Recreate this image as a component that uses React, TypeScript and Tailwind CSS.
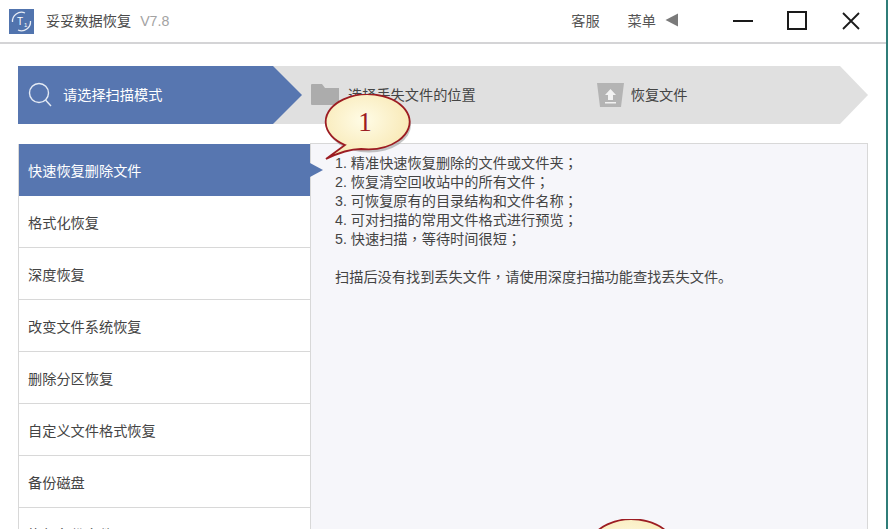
const font = "font-['Liberation_Sans','Noto_Sans_CJK_SC',sans-serif]";

const modes = ['快速恢复删除文件', '格式化恢复', '深度恢复', '改变文件系统恢复', '删除分区恢复', '自定义文件格式恢复', '备份磁盘', '恢复备份文件'];

const features = ['1. 精准快速恢复删除的文件或文件夹；', '2. 恢复清空回收站中的所有文件；', '3. 可恢复原有的目录结构和文件名称；', '4. 可对扫描的常用文件格式进行预览；', '5. 快速扫描，等待时间很短；'];

// the picture centres its full-width punctuation, which the TC cut of the font does
function Line({ text }: { text: string }) {
    return (
        <p className="h-[19px]">
            {text.split(/([；，])/).map((part, i) =>
                part === '；' || part === '，' ? (
                    <span key={i} className="font-['Noto_Sans_CJK_TC',sans-serif]">{part}</span>
                ) : (
                    part
                ),
            )}
        </p>
    );
}

function Logo() {
    return (
        <svg width="25" height="25" viewBox="0 0 25 25" className="shrink-0">
            <rect width="25" height="25" fill="#5174ae" />
            <path d="M3.5 13 A9 9 0 0 1 16 4" fill="none" stroke="#e8edf5" strokeWidth="1.3" />
            <path d="M21.5 12 A9 9 0 0 1 9 21" fill="none" stroke="#e8edf5" strokeWidth="1.3" />
            <text x="8" y="16" fontSize="10" fill="#fff" fontFamily="Liberation Sans">T</text>
            <text x="15" y="18" fontSize="6" fill="#fff" fontFamily="Liberation Sans">1</text>
        </svg>
    );
}

function TitleBar() {
    return (
        <header className="flex h-[44px] items-center border-b-2 border-[#d4d4d6] bg-white pl-[9px] text-[14.2px]">
            <Logo />
            <span className="ml-[12px] pt-[2px] text-[#4a4a4a]">妥妥数据恢复</span>
            <span className="ml-[9px] pt-[2px] text-[#a3a3a3]">V7.8</span>
            <span className="ml-auto pt-[2px] text-[#555]">客服</span>
            <span className="ml-[28px] pt-[2px] text-[#555]">菜单</span>
            <svg width="14" height="14" viewBox="0 0 14 14" className="mb-[2px] ml-[9px]">
                <path d="M13 0.5 V13.5 L0.5 7 Z" fill="#7a7a7a" />
            </svg>
            <svg width="20" height="20" viewBox="0 0 20 20" className="ml-[54px]">
                <path d="M0 10 H20" stroke="#1a1a1a" strokeWidth="2" />
            </svg>
            <svg width="20" height="20" viewBox="0 0 20 20" className="ml-[34px]">
                <rect x="1" y="1" width="18" height="17" fill="none" stroke="#1a1a1a" strokeWidth="2" />
            </svg>
            <svg width="18" height="18" viewBox="0 0 18 18" className="ml-[35px] mr-[26px]">
                <path d="M1 1 L17 17 M17 1 L1 17" stroke="#1a1a1a" strokeWidth="1.8" />
            </svg>
        </header>
    );
}

function Steps() {
    return (
        <div className="relative mx-[18px] mt-[22px] flex h-[58px] w-[850px] items-center bg-[#e0e0e0] text-[14.2px] [clip-path:polygon(0_0,822px_0,850px_29px,822px_58px,0_58px)]">
            <div className="flex h-full w-[284px] items-center bg-[#5776b0] pl-[10px] text-white [clip-path:polygon(0_0,255px_0,284px_29px,255px_58px,0_58px)]">
                <svg width="24" height="26" viewBox="0 0 24 26" fill="none" stroke="#e4eaf4" strokeWidth="1.4">
                    <circle cx="11" cy="11" r="9.5" />
                    <path d="M17.5 18 L23 24" />
                </svg>
                <span className="ml-[11px] pt-[2px]">请选择扫描模式</span>
            </div>
            <div className="ml-[9px] flex items-center text-[#444]">
                <svg width="28" height="21" viewBox="0 0 28 21">
                    <path d="M1 0 H11 L14 4 H28 V20 Q28 21 27 21 H1 Q0 21 0 20 V1 Q0 0 1 0 Z" fill="#acacac" />
                </svg>
                <span className="ml-[9px] pt-[2px]">选择丢失文件的位置</span>
            </div>
            <div className="ml-[121px] flex items-center text-[#444]">
                <svg width="27" height="24" viewBox="0 0 27 24">
                    <path d="M0 0 H27 L24 24 H3 Z" fill="#b4b4b4" />
                    <path d="M13.5 6 L19 12 H16 V17 H11 V12 H8 Z M8 19 H19 V20.5 H8 Z" fill="#f2f2f2" />
                </svg>
                <span className="ml-[7px] pt-[2px]">恢复文件</span>
            </div>
        </div>
    );
}

function ModeList() {
    return (
        <ul className="w-[292px] shrink-0 border-l border-[#d8d8d8] text-[14.2px] text-[#444]">
            {modes.map((m, i) => (
                <li key={m} className={i === 0 ? 'relative flex h-[52px] items-center bg-[#5776b0] pl-[9px] pt-[4px] text-white' : 'flex h-[52px] items-center border-b border-[#d8d8d8] pl-[9px] pt-[4px]'}>
                    {m}
                    {i === 0 && <span className="absolute left-full top-[19px] border-y-[7px] border-l-[13px] border-y-transparent border-l-[#5776b0]" />}
                </li>
            ))}
        </ul>
    );
}

function Bubble({ id, label, className }: { id: string; label?: string; className: string }) {
    return (
        <svg width="100" height="80" viewBox="0 0 100 80" className={className}>
            <defs>
                <radialGradient id={id} cx="45%" cy="40%" r="60%">
                    <stop offset="0%" stopColor="#fffce6" />
                    <stop offset="100%" stopColor="#f8e8b4" />
                </radialGradient>
            </defs>
            <ellipse cx="48" cy="28" rx="42" ry="27.5" fill="#8a8a8a" opacity="0.5" transform="translate(3 3)" />
            <path d="M8 65 L27 51 A42 27.5 0 1 1 43 55 Q28 55 8 65 Z" fill={`url(#${id})`} stroke="#9c1c22" strokeWidth="1.8" />
            {label && (
                <text x="47" y="37" fontSize="27" textAnchor="middle" fill="#9c1c22" fontFamily="Liberation Serif">
                    {label}
                </text>
            )}
        </svg>
    );
}

export default function App() {
    return (
        <div className={`relative h-[529px] w-[888px] overflow-hidden border-r-2 border-[#2f7d78] bg-white ${font}`}>
            <TitleBar />
            <Steps />
            <div className="mx-[18px] mt-[20px] flex w-[850px] items-stretch">
                <ModeList />
                <div className="mt-[-1px] min-h-[400px] flex-1 border border-[#d8d8d8] bg-[#f6f6fa] pl-[24px] pt-[9px] text-[14.2px] leading-[19px] text-[#444]">
                    {features.map((f) => (
                        <Line key={f} text={f} />
                    ))}
                    <div className="mt-[19px]">
                        <Line text="扫描后没有找到丢失文件，请使用深度扫描功能查找丢失文件。" />
                    </div>
                </div>
            </div>
            <Bubble id="bubble-one" label="1" className="absolute left-[318px] top-[94px]" />
            <Bubble id="bubble-two" className="absolute left-[582px] top-[519px]" />
        </div>
    );
}
